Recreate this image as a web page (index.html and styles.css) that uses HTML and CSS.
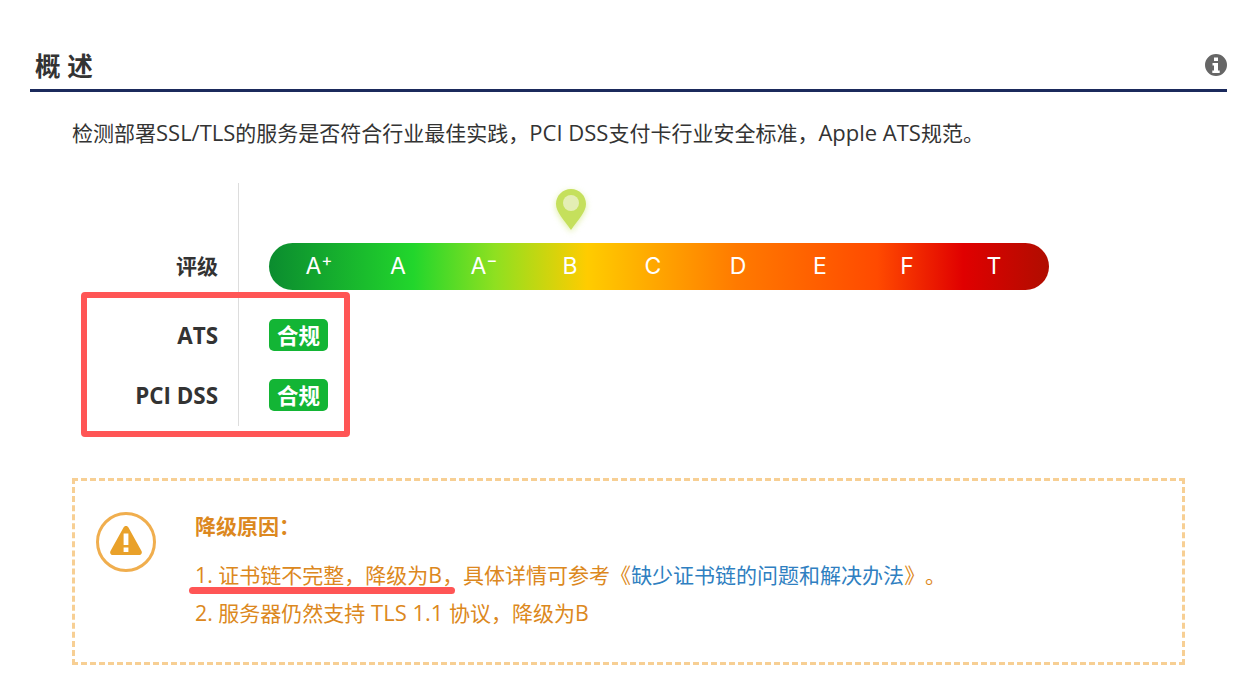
FILE: index.html
```html
<!DOCTYPE html>
<html lang="zh-CN">
<head>
<meta charset="utf-8">
<title>概述</title>
<link rel="stylesheet" href="styles.css">
</head>
<body>
<section class="overview">
  <header class="head">
    <h2 class="title">概 述</h2>
    <svg class="info" viewBox="0 0 24 24" width="24" height="24"><path fill="#666" fill-rule="evenodd" d="M12 1a11 11 0 1 0 0 22 11 11 0 0 0 0-22zM10 4.500h4v3.500h-4zM8.500 10h5.500v7.500h1.700v2.500H8.300v-2.500H10V12.500H8.500z"/></svg>
  </header>
  <p class="desc">检测部署<span class="en">SSL/TLS</span>的服务是否符合行业最佳实践，<span class="en">PCI DSS</span>支付卡行业安全标准，<span class="en">Apple ATS</span>规范。</p>

  <div class="table">
    <div class="row row-rating">
      <div class="label label-cn">评级</div>
      <div class="cell">
        <svg class="pin" viewBox="0 0 50 60" width="50" height="60">
          <defs><filter id="glow" x="-40%" y="-40%" width="180%" height="180%"><feGaussianBlur stdDeviation="3"/></filter></defs>
          <path d="M25 12c-8.300 0-15 6.700-15 15 0 8 8 16 15 26 7-10 15-18 15-26 0-8.300-6.700-15-15-15z" fill="#c5e05c" opacity=".55" filter="url(#glow)"/>
          <path d="M25 10c-8.300 0-15 6.700-15 15 0 8 8 16 15 26 7-10 15-18 15-26 0-8.300-6.700-15-15-15z" fill="#c5e05c"/>
          <circle cx="25" cy="24" r="8" fill="#e4eeb4"/>
        </svg>
        <div class="bar">
          <span>A<sup>+</sup></span><span>A</span><span>A<sup>−</sup></span><span>B</span><span>C</span><span>D</span><span>E</span><span>F</span><span>T</span>
        </div>
      </div>
    </div>
    <div class="row">
      <div class="label">ATS</div>
      <div class="cell"><span class="badge">合规</span></div>
    </div>
    <div class="row row-last">
      <div class="label">PCI DSS</div>
      <div class="cell"><span class="badge">合规</span></div>
    </div>
    <div class="highlight"></div>
  </div>

  <div class="notice">
    <svg class="warn" viewBox="0 0 60 60" width="60" height="60">
      <circle cx="30" cy="30" r="28.500" fill="none" stroke="#f0ae4e" stroke-width="3"/>
      <path fill="#e9a12a" fill-rule="evenodd" d="M30 14c1.200 0 2 .6 2.600 1.700l12.900 23.300c1 1.900-.2 4-2.400 4H16.900c-2.200 0-3.400-2.100-2.400-4l12.900-23.300c.6-1.100 1.400-1.700 2.600-1.700zM27.600 21.500v11.500h4.800V21.500zM27.600 35.500v4.500h4.800v-4.500z"/>
    </svg>
    <div class="reasons">
      <div class="reasons-title">降级原因：</div>
      <div class="reason"><span class="num">1. </span>证书链不完整，降级为<span class="num">B</span>，具体详情可参考《<a class="link">缺少证书链的问题和解决办法</a>》。</div>
      <div class="reason"><span class="num">2. </span>服务器仍然支持<span class="en"> TLS 1.1 </span>协议，降级为<span class="num">B</span></div>
    </div>
    <div class="underline"></div>
  </div>
</section>
</body>
</html>
```

FILE: styles.css
```css
* { box-sizing: border-box; }
html, body { margin: 0; background: #fff; }
body {
  font-family: "Open Sans", "Noto Sans CJK SC", sans-serif;
  color: #333;
  overflow: hidden;
  text-spacing-trim: space-all;
}
.overview { padding: 44px 26px 0 30px; }
.head {
  display: flex;
  align-items: center;
  justify-content: space-between;
  height: 48px;
  border-bottom: 3px solid #1b2a5c;
  padding: 0 0 3px 5px;
}
.title { margin: 4px 0 0; font-size: 25.600px; font-weight: 700; line-height: 34px; }
.info { margin-right: -1px; }
.desc {
  margin: 26px 0 0 42px;
  font-size: 21px;
  line-height: 30px;
}
.en { font-size: 22px; line-height: 0; }
.table { position: relative; margin: 35px 0 0 42px; }
.row { display: flex; height: 60px; }
.row-rating { height: 122px; }
.row-last { height: 61px; }
.row-last .label, .row-last .cell { padding-bottom: 1px; }
.label {
  width: 167px;
  padding-right: 20px;
  border-right: 1px solid #ddd;
  display: flex;
  align-items: center;
  justify-content: flex-end;
  font-size: 22.400px;
  font-weight: 700;
}
.label-cn { font-size: 21px; padding-top: 41px; }
.cell {
  position: relative;
  display: flex;
  align-items: center;
  padding-left: 30px;
}
.row-rating .cell { align-items: flex-start; padding-top: 60px; }
.pin {
  position: absolute;
  left: 307px;
  top: -4px;
}
.bar {
  display: grid;
  grid-template-columns: 100px 58px 114px 58px 108px 62px 102px 72px 102px;
  width: 780px;
  height: 47px;
  border-radius: 24px;
  background: linear-gradient(90deg, #0b8c2f 0%, #22d62c 18.500%, #8fe020 29%, #ffcc00 40.800%, #ff7a00 60%, #ff4a00 78%, #e00000 89%, #b00d00 100%);
  color: #fff;
  font-family: Inter, "Liberation Sans", sans-serif;
  font-size: 23px;
  line-height: 47px;
  text-align: center;
}
.bar sup { font-size: 17px; line-height: 0; vertical-align: 8px; }
.badge {
  display: block;
  width: 59px;
  height: 32px;
  border-radius: 5px;
  background: #13b535;
  color: #fff;
  font-size: 21.500px;
  font-weight: 700;
  line-height: 33px;
  text-align: center;
}
.highlight {
  position: absolute;
  left: 9px;
  top: 109px;
  width: 269px;
  height: 145px;
  border: 6px solid #ff5555;
  border-radius: 4px;
}
.notice {
  position: relative;
  display: flex;
  width: 1113px;
  height: 187px;
  margin: 52px 0 0 42px;
  padding: 31px 0 0 21px;
  border: 3px dashed #f7cf94;
  color: #dc8820;
  font-size: 21px;
}
.num { font-size: 21.330px; line-height: 0; }
.warn { flex: none; }
.reasons { margin: -1px 0 0 39px; }
.reasons-title { font-weight: 700; line-height: 30px; margin-bottom: 15px; }
.reason { line-height: 38px; }
.link { color: #2f7fc1; }
.underline {
  position: absolute;
  left: 114px;
  top: 106px;
  width: 266px;
  height: 7px;
  border-radius: 4px;
  background: #ff5555;
}
```
